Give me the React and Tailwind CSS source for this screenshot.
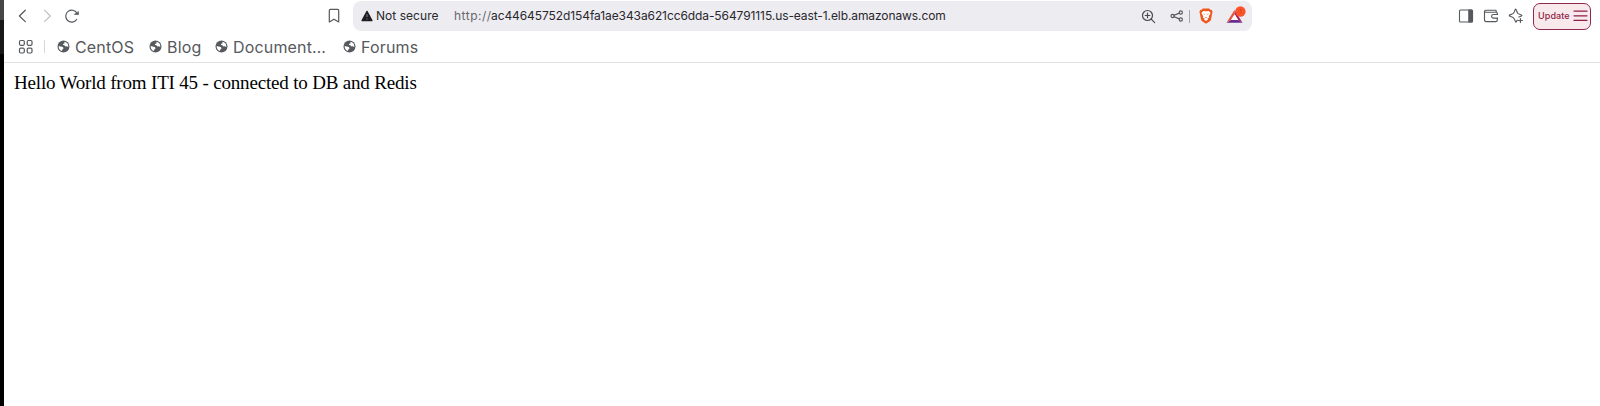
const stroke = { fill: "none", stroke: "currentColor", strokeLinecap: "round", strokeLinejoin: "round" };

function Globe() {
  return (
    <svg className="h-[13px] w-[13px] shrink-0" viewBox="0 0 13 13">
      <circle cx="6.5" cy="6.5" r="6" fill="#56595d" />
      <path d="M1.7 6 3.6 6.4 5.8 6.9 6.6 8.3 5.4 9.4 4.8 11A4.9 4.9 0 0 1 1.7 6Z" fill="#fff" />
      <path d="M7.5 1.7A4.9 4.9 0 0 1 11.3 6.9L9.8 6.3 8.4 6.6 7.8 5.5 6.2 5.1 5.9 4.1 7.4 3.4Z" fill="#fff" />
    </svg>
  );
}

function Bookmark({ label, className }) {
  return (
    <a className={"flex shrink-0 items-center gap-[5px] " + className}>
      <Globe />
      <span className="whitespace-nowrap">{label}</span>
    </a>
  );
}

function Toolbar() {
  return (
    <div className="flex h-8 items-center text-[#56595d]">
      <svg className="ml-[14px] h-4 w-[10px] shrink-0" viewBox="0 0 10 16" {...stroke} strokeWidth="1.2">
        <path d="M7.3 2.2 1.4 8 7.3 13.6" />
      </svg>
      <svg className="ml-[14px] h-4 w-[10px] shrink-0 text-[#bfc1c4]" viewBox="0 0 10 16" {...stroke} strokeWidth="1.2">
        <path d="M2.5 2.2 8.3 8 2.5 13.6" />
      </svg>
      <svg className="ml-[12px] h-4 w-4 shrink-0" viewBox="0 0 16 16" {...stroke} strokeWidth="1.2">
        <path d="M12.7 11.5A6 6 0 1 1 13 5.2" />
        <path d="M10.8 6.4H14.4V3.9Z" fill="currentColor" strokeWidth="0.8" />
      </svg>
      <svg className="ml-[248px] h-4 w-3 shrink-0" viewBox="0 0 12 16" {...stroke} strokeWidth="1.2">
        <path d="M1.3 2.4Q1.3 1.4 2.3 1.4H9.7Q10.7 1.4 10.7 2.4V14L6 11.2 1.3 14Z" />
      </svg>

      <div className="ml-[13px] flex h-[30px] w-[899px] shrink-0 items-center rounded-[8px] bg-[#edecf1] pl-2 text-[12px] text-[#28282d]">
        <svg className="h-3 w-3 shrink-0" viewBox="0 0 12 12">
          <path d="M6 1.3 11 10.6H1Z" fill="#1f1f23" stroke="#1f1f23" strokeWidth="1.2" strokeLinejoin="round" />
          <path d="M6 4.2V7.2M6 8.6V9.6" stroke="#98989f" strokeWidth="0.8" />
        </svg>
        <span className="ml-[3px] w-[78px] shrink-0 whitespace-nowrap tracking-[0.04px]">Not secure</span>
        <span className="w-[37px] shrink-0 whitespace-nowrap tracking-[0.5px] text-[#67676c]">http://</span>
        <span className="w-[648px] shrink-0 whitespace-nowrap tracking-[-0.09px]">ac44645752d154fa1ae343a621cc6dda-564791115.us-east-1.elb.amazonaws.com</span>
        <svg className="ml-[2px] h-[15px] w-[15px] shrink-0 text-[#4b4b50]" viewBox="0 0 15 15" {...stroke} strokeWidth="1.2">
          <circle cx="6.5" cy="6.5" r="5" />
          <path d="M10.2 10.2 13.7 13.7M4.2 6.5H8.8M6.5 4.2V8.8" />
        </svg>
        <svg className="ml-[14px] h-[14px] w-[14px] shrink-0 text-[#56565b]" viewBox="0 0 14 14" {...stroke} strokeWidth="1.15">
          <circle cx="2.6" cy="7" r="1.6" />
          <circle cx="10.8" cy="3.5" r="1.6" />
          <circle cx="10.8" cy="10.5" r="1.6" />
          <path d="M4.1 6.3 9.3 4.1M4.1 7.7 9.3 9.9" />
        </svg>
        <span className="ml-[5px] h-[13px] w-px shrink-0 bg-[#a5a5ab]" />
        <svg className="ml-[9px] h-4 w-[14px] shrink-0" viewBox="0 0 14 16">
          <path d="M3.8 .5H10.2L11.4 1.8 12.8 1.9 13.6 4 13.2 5.2 12 11.5Q11.7 12.5 10.8 13.2L7 15.7 3.2 13.2Q2.3 12.5 2 11.5L.8 5.2 .4 4 1.2 1.9 2.6 1.8Z" fill="#f1561d" />
          <path d="M4.2 2.9 7 3.3 9.8 2.9 11.6 5 9.8 8.3 10.2 9.4 8.4 10.6 9 11.4 7 13 5 11.4 5.6 10.6 3.8 9.4 4.2 8.3 2.4 5Z" fill="#fff" />
          <path d="M4 5.6 5.9 5.9 5.4 6.7ZM10 5.6 8.1 5.9 8.6 6.7ZM5.8 9.4 7 9 8.2 9.4 7 10Z" fill="#f1561d" />
        </svg>
        <svg className="ml-[12px] h-[20px] w-[24px] shrink-0" viewBox="0 0 24 20">
          <path d="M1.5 16.8H17.5L13.2 14.1H5.8Z" fill="#662d91" />
          <path d="M9.5 4.1 17.5 16.8 13.2 14.1 9.5 8.3Z" fill="#9e1f63" />
          <path d="M9.5 8.1 13.2 14.1H5.8Z" fill="#fff" />
          <path d="M9.5 4.1 1.5 16.8 5.8 14.1 9.5 8.3Z" fill="#e5533f" />
          <circle cx="15.4" cy="5.5" r="5.2" fill="#fb542b" />
          <text x="15.4" y="7.6" textAnchor="middle" fontSize="6" fill="#c93a20" fontFamily="Inter">1</text>
        </svg>
      </div>

      <svg className="ml-[206px] h-4 w-4 shrink-0" viewBox="0 0 16 16" {...stroke} strokeWidth="1.1">
        <rect x="1.5" y="2" width="13" height="12" rx="1" />
        <path d="M10.8 2H13.6Q14.5 2 14.5 3V13Q14.5 14 13.6 14H10.8Z" fill="currentColor" />
      </svg>
      <svg className="ml-[9px] h-4 w-4 shrink-0" viewBox="0 0 16 16" {...stroke} strokeWidth="1.15">
        <path d="M14.3 6.2V5.2Q14.3 4.2 13.3 4.2H2.9Q1.5 4.2 1.5 3.2T2.9 2.2H12.4Q13.2 2.2 13.2 3V4.2M1.5 3.2V12Q1.5 13.6 3.2 13.6H12.6Q14.3 13.6 14.3 12V10.2" />
        <path d="M14.6 6.5H10.4A1.8 1.8 0 0 0 10.4 10.1H14.6" />
      </svg>
      <svg className="ml-[9px] h-4 w-4 shrink-0" viewBox="0 0 16 16" {...stroke} strokeWidth="1.15">
        <path d="M9.3 12.1Q8.4 13.4 8 14.2C7.3 14.2 6.7 10.9 5.3 9.6 4.3 8.8 1.2 8.5 1.2 7.6S4.3 6.3 5.3 5.4C6.7 4.1 6.8 1 7.6 1S8.6 4.1 9.8 5.4C10.8 6.4 14 6.8 14 7.6 14 8.2 12.2 8.5 10.9 9.1M12.4 10.5V14.5M10.4 12.5H14.4" />
      </svg>
      <button className="ml-[9px] flex h-[27px] w-[58px] shrink-0 items-center rounded-[7px] border border-[#8f294e] bg-[#f7e9ec] pl-[4px] text-[#8f1d45]">
        <span className="w-[35px] shrink-0 whitespace-nowrap text-left text-[9px] font-medium tracking-[0.1px]">Update</span>
        <svg className="h-3 w-[15px] shrink-0" viewBox="0 0 15 12" {...stroke} strokeWidth="1.2">
          <path d="M1 1.2H14M1 5.8H14M1 10.4H14" />
        </svg>
      </button>
    </div>
  );
}

export default function App() {
  return (
    <div className="flex h-[406px] w-[1600px] overflow-hidden bg-white font-['Inter',sans-serif]">
      <div className="flex w-1 shrink-0 flex-col bg-black">
        <div className="h-5 bg-[#464646]" />
        <div className="h-[34px] bg-[#171717]" />
      </div>
      <main className="min-w-0 flex-1">
        <Toolbar />
        <nav className="flex h-[31px] items-center border-b border-[#e1e1e4] pb-px text-[16px] tracking-[0.16px] text-[#56595d]">
          <svg className="ml-[14px] h-4 w-4 shrink-0" viewBox="0 0 16 16" {...stroke} strokeWidth="1.2">
            <rect x="1.5" y="1.5" width="4.8" height="4.8" rx="1.2" />
            <rect x="9.2" y="1.5" width="4.8" height="4.8" rx="1.2" />
            <rect x="1.5" y="9.2" width="4.8" height="4.8" rx="1.2" />
            <rect x="9.2" y="9.2" width="4.8" height="4.8" rx="1.2" />
          </svg>
          <span className="ml-[10px] h-[13px] w-px shrink-0 bg-[#d5d6d8]" />
          <Bookmark label="CentOS" className="ml-[12px] w-[92px]" />
          <Bookmark label="Blog" className="w-[66px]" />
          <Bookmark label="Document…" className="w-[128px]" />
          <Bookmark label="Forums" className="" />
        </nav>
        <p className="pl-[10px] pt-2 font-['Liberation_Serif',serif] text-[19px] leading-6 tracking-[-0.18px] text-black">
          Hello World from ITI 45 - connected to DB and Redis
        </p>
      </main>
    </div>
  );
}
